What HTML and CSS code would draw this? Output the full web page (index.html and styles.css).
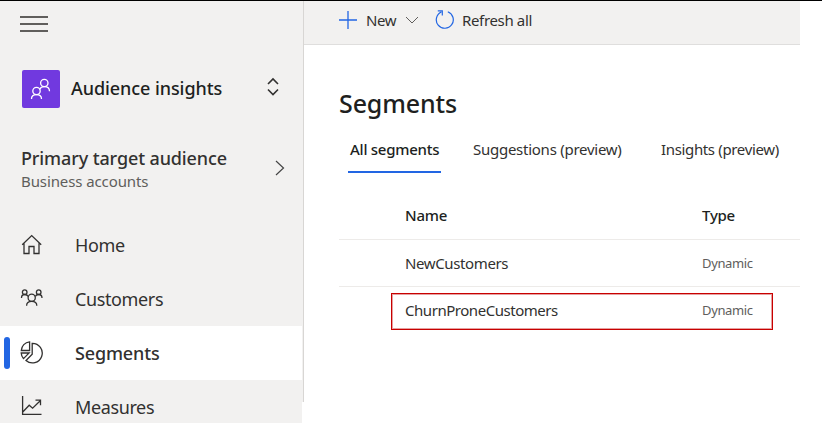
FILE: index.html
```html
<!DOCTYPE html>
<html lang="en">
<head>
<meta charset="utf-8">
<title>Segments</title>
<link rel="stylesheet" href="styles.css">
</head>
<body>
<div class="app">
  <aside class="sidebar">
    <div class="menu-button"><span></span><span></span><span></span></div>
    <div class="product">
      <span class="tile"><svg width="38" height="38" viewBox="0 0 38 38"><g fill="none" stroke="#fff" stroke-width="1.3"><circle cx="22.3" cy="13" r="3.7"/><circle cx="14.5" cy="21" r="3.7"/><path d="M17.6 19.5c1-2 2.700-2.800 4.700-2.800 3 0 5.200 1.800 5.200 4.600M9.500 29c0-2.600 2-4.300 5-4.300s5 1.700 5 4.300"/></g></svg></span>
      <span class="product-name">Audience insights</span>
      <svg class="updown" width="14" height="20" viewBox="0 0 14 20"><path d="M2 7l5-5 5 5M2 12.500l5 5 5-5" fill="none" stroke="#323130" stroke-width="1.6"/></svg>
    </div>
    <div class="audience">
      <div class="audience-text">
        <div class="audience-name">Primary target audience</div>
        <div class="audience-kind">Business accounts</div>
      </div>
      <svg class="next" width="12" height="18" viewBox="0 0 12 18"><path d="M2 2l7.500 7L2 16" fill="none" stroke="#444" stroke-width="1.2"/></svg>
    </div>
    <nav class="nav">
      <a class="item"><svg width="24" height="24" viewBox="0 0 24 24"><path d="M2.200 11.800L11.700 2.600l9.500 9.200M4 10.300v10.200h5v-7h5v7h5V10.300" fill="none" stroke="#323130" stroke-width="1.3"/></svg><span class="t-home">Home</span></a>
      <a class="item"><svg width="24" height="24" viewBox="0 0 24 24"><g fill="none" stroke="#323130" stroke-width="1.300"><circle cx="4.700" cy="5.200" r="2.300"/><circle cx="18.700" cy="5.200" r="2.300"/><circle cx="11.700" cy="10.700" r="3.600"/><path d="M1.500 11c0-2.200 1.200-3.500 3.200-3.500 1.800 0 2.900.8 3.600 2M22 11c0-2.200-1.300-3.500-3.300-3.500-1.800 0-2.900.8-3.500 2M6.600 18.700c0-2.600 2-4.400 5.100-4.400s5.100 1.800 5.100 4.400"/></g></svg><span class="t-customers">Customers</span></a>
      <a class="item selected"><svg width="24" height="24" viewBox="0 0 24 24"><g fill="none" stroke="#323130" stroke-width="1.300"><path d="M12.200 2.300a9.800 9.800 0 1 1-6.200 17.200l6.200-6.300z"/><path d="M9.600 0.900v8.600H1.300C1.500 4.800 5 1.300 9.600 0.900zM1.200 12h7.900l-5.600 5.600C2.100 16 1.300 14.200 1.200 12z"/></g></svg><span class="t-segments">Segments</span></a>
      <a class="item"><svg width="24" height="24" viewBox="0 0 24 24"><path d="M2.600 1v18.400H21.500M3 16.800l6.200-6.600 3.400 3L20.500 5.500M15.500 5.200h5v5" fill="none" stroke="#323130" stroke-width="1.300"/></svg><span class="t-measures">Measures</span></a>
    </nav>
  </aside>
  <div class="divider"></div>
  <main class="main">
    <div class="toolbar">
      <svg class="plus" width="18" height="18" viewBox="0 0 18 18"><path d="M9 0v18M0 9h18" stroke="#2266e3" stroke-width="1.300"/></svg>
      <span class="t-new">New</span>
      <svg class="chevron" width="14" height="8" viewBox="0 0 14 8"><path d="M1 1l6 6 6-6" fill="none" stroke="#605e5c"/></svg>
      <svg class="refresh" width="20" height="20" viewBox="0 0 20 20"><path d="M12.800 1.800a8.500 8.500 0 1 1-6.500.2M2.800 0.900h4.500v4.500" fill="none" stroke="#2266e3" stroke-width="1.200"/></svg>
      <span class="t-refresh">Refresh all</span>
    </div>
    <h1>Segments</h1>
    <div class="tabs">
      <a class="tab active"><span class="t-all">All segments</span></a>
      <a class="tab"><span class="t-sugg">Suggestions (preview)</span></a>
      <a class="tab"><span class="t-ins">Insights (preview)</span></a>
    </div>
    <div class="table">
      <div class="row head"><span class="t-name">Name</span><span class="t-type">Type</span></div>
      <div class="row"><span class="t-nc">NewCustomers</span><span class="dynamic">Dynamic</span></div>
      <div class="row marked"><span class="t-cpc">ChurnProneCustomers</span><span class="dynamic">Dynamic</span></div>
    </div>
  </main>
</div>
</body>
</html>
```
FILE: styles.css
```css
* { box-sizing: border-box; }
body { margin: 0; background: #fff; color: #323130; font-family: "Noto Sans", "Open Sans", sans-serif; overflow: hidden; }
svg { display: block; flex: none; }
span { white-space: nowrap; }
.app { display: flex; height: 423px; border-top: 1px solid #000; overflow: hidden; }
.sidebar { width: 302px; flex: none; background: #f2f1f0; }
.menu-button { display: flex; flex-direction: column; gap: 5px; padding: 15px 0 0 20px; }
.menu-button span { width: 28px; height: 2px; background: #605e5c; }
.product { display: flex; align-items: center; height: 38px; margin-top: 38px; padding: 0 22px; }
.tile { width: 38px; height: 38px; border-radius: 2px; background: #7139df; margin-right: 11px; }
.product-name { font-size: 18px; font-weight: 500; letter-spacing: -0.07px; margin-top: -2px; color: #201f1e; }
.updown { margin-left: auto; margin-top: -4px; }
.audience { display: flex; align-items: center; justify-content: space-between; height: 50px; margin-top: 36px; padding: 0 16px 0 21px; }
.audience-name { font-size: 18px; line-height: 24px; font-weight: 500; letter-spacing: -0.12px; white-space: nowrap; }
.audience-kind { font-size: 15px; line-height: 23px; letter-spacing: -0.1px; color: #605e5c; white-space: nowrap; }
.next { margin-top: -2px; }
.nav { margin-top: 24px; }
.item { display: flex; align-items: center; height: 54px; padding-left: 20px; gap: 31px; font-size: 18px; letter-spacing: -0.38px; position: relative; }
.selected { background: #fff; font-weight: 500; letter-spacing: -0.15px; }
.selected::before { content: ""; position: absolute; left: 4px; top: 11px; width: 6px; height: 32px; border-radius: 3px; background: #2266e3; }
.divider { width: 2px; height: 401px; flex: none; background: #f2f1f0; border-right: 1px solid #d8d6d4; }
.main { width: 496px; flex: none; }
.toolbar { display: flex; align-items: center; height: 44px; padding: 0 0 6px 35px; background: #f2f1f0; border-bottom: 1px solid #dfdedd; font-size: 15px; letter-spacing: -0.35px; }
.t-new { margin-left: 9px; width: 30px; }
.chevron { margin-left: 9px; }
.refresh { margin-left: 16px; }
.t-refresh { margin-left: 7px; }
h1 { margin: 40px 0 0 35px; font-size: 25px; line-height: 36px; font-weight: 500; letter-spacing: -0.12px; color: #201f1e; width: max-content; }
.tabs { display: flex; gap: 30px; margin-left: 44px; margin-top: 7px; }
.tab { height: 45px; padding: 9px 2px 0; font-size: 15px; line-height: 24px; letter-spacing: -0.26px; }
.tab:nth-child(2) { width: 157px; }
.tab:nth-child(3) { margin-left: 1px; letter-spacing: -0.35px; }
.tab span { display: block; }
.active { width: 93px; font-weight: 500; letter-spacing: -0.25px; color: #201f1e; border-bottom: 2px solid #2266e3; }
.table { margin: 19px 0 0 35px; }
.row { display: grid; grid-template-columns: 297px 1fr; align-items: center; height: 47px; padding: 0 0 1px 66px; border-bottom: 1px solid #edebe9; font-size: 15px; letter-spacing: -0.38px; }
.row span { width: max-content; }
.head { height: 48px; padding-bottom: 1px; font-weight: 500; letter-spacing: -0.25px; color: #201f1e; }
.row .dynamic { font-size: 13px; letter-spacing: -0.35px; color: #605e5c; }
.marked { height: 37px; width: 382px; margin: 6px 0 0 52px; padding: 0 0 3px 13px; border: 1px solid #c80000; box-shadow: inset 0 0 0 1px #e6a0a0; letter-spacing: -0.46px; }
```
